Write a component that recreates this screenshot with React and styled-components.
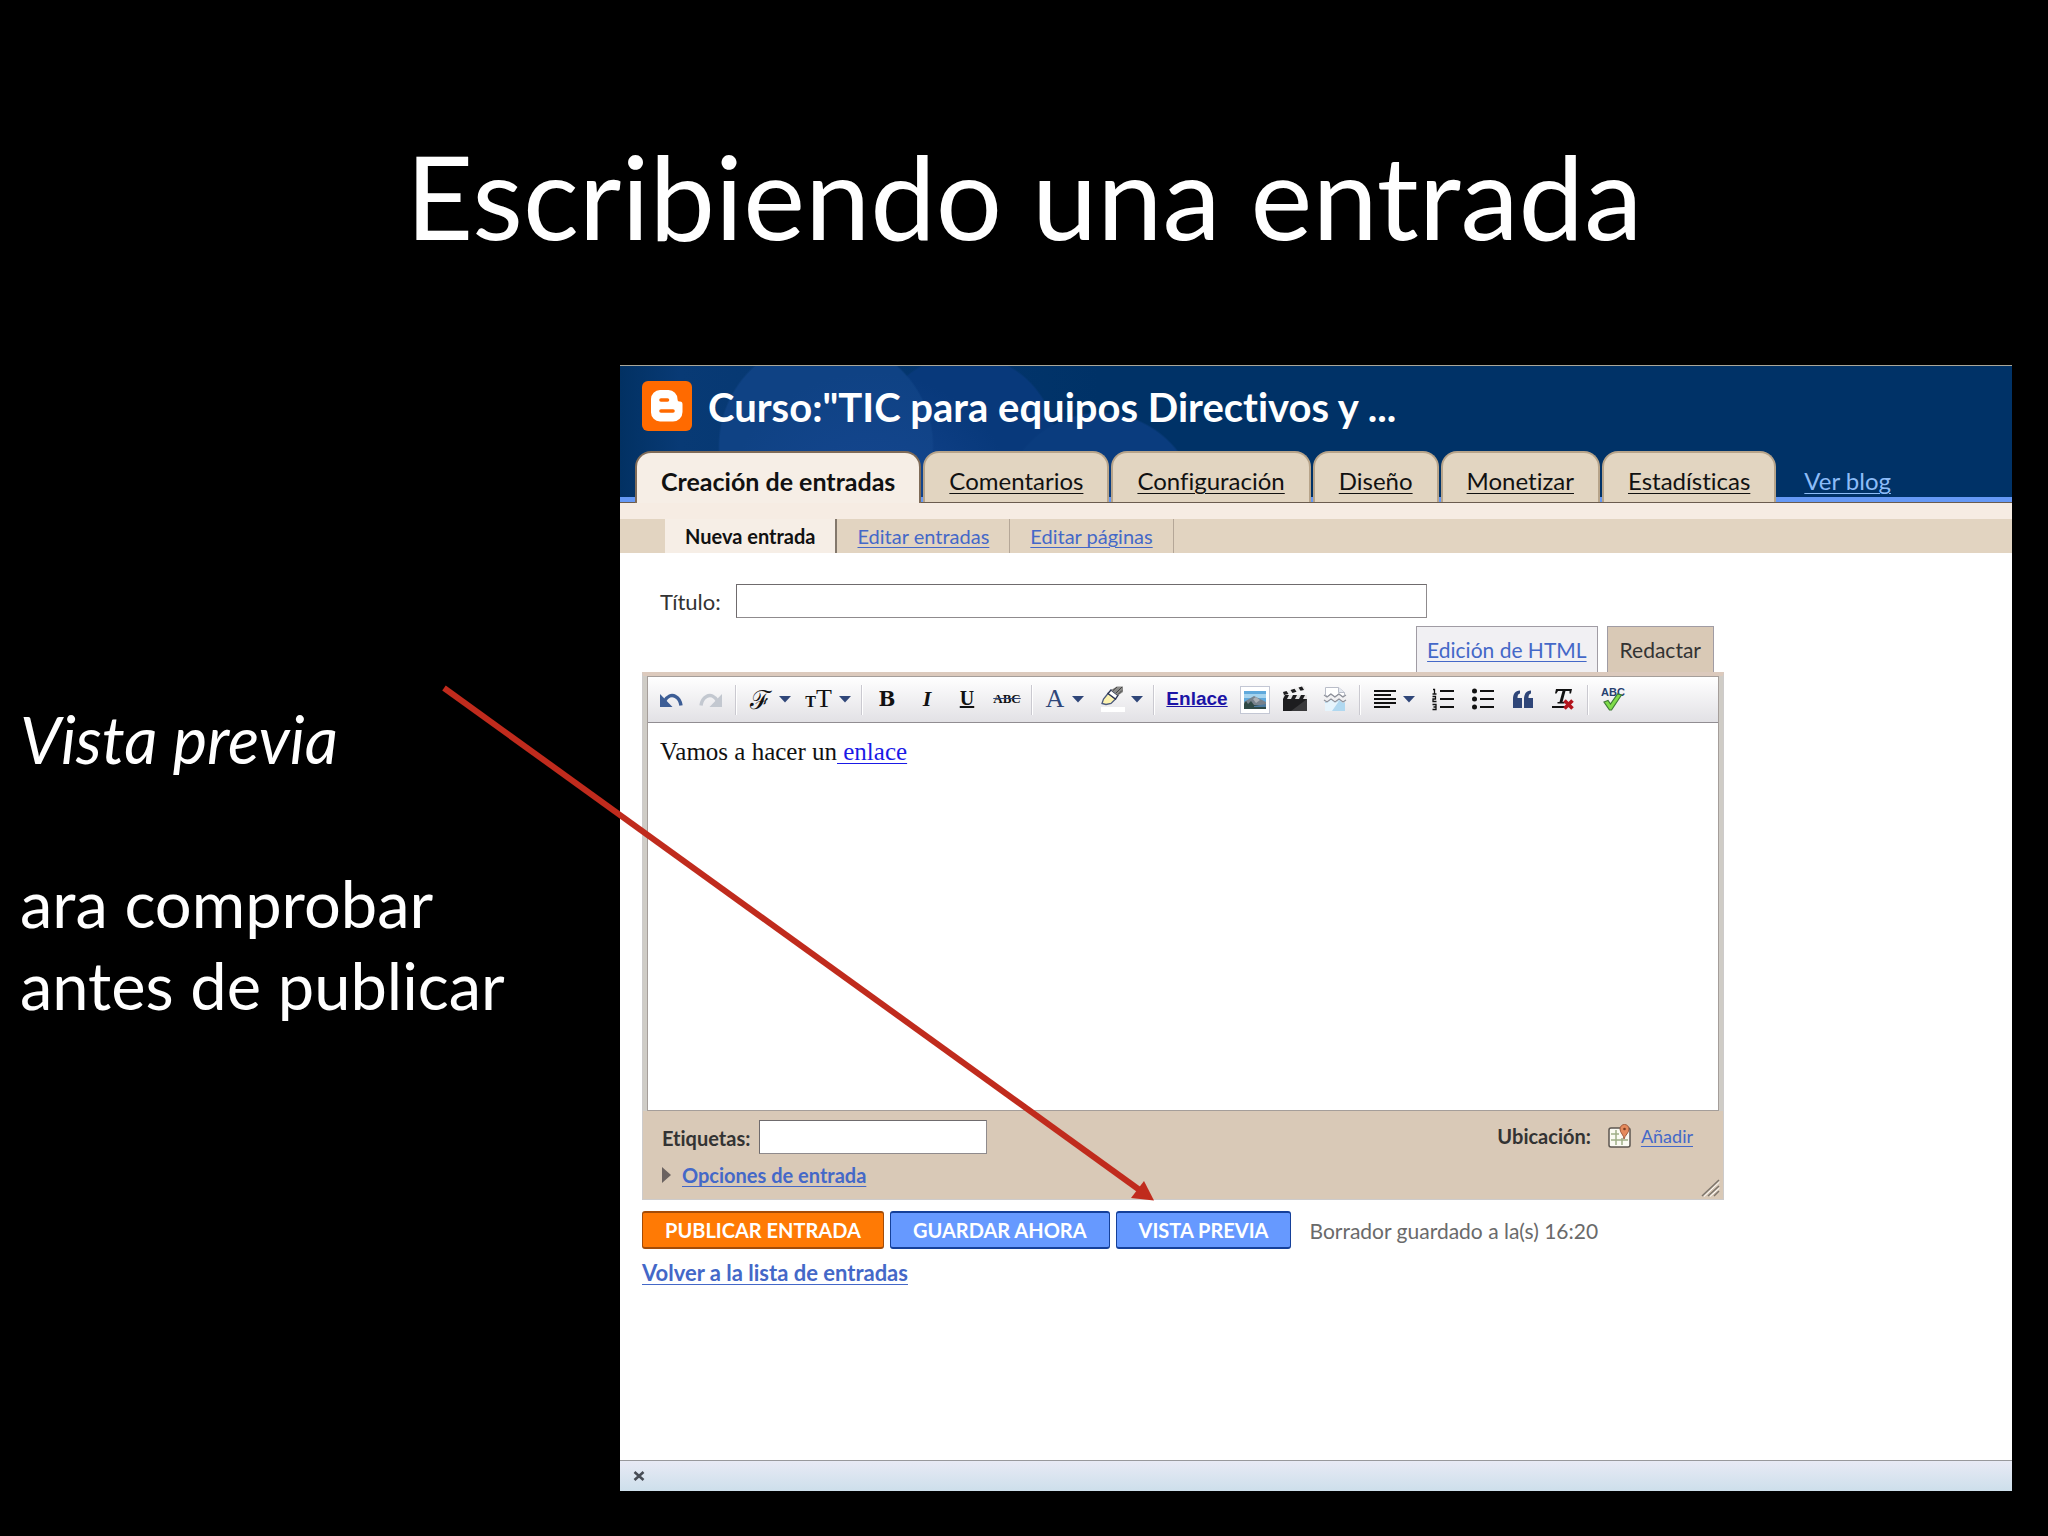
import React from "react";
import styled, { createGlobalStyle } from "styled-components";

const ui = `Lato, "Open Sans", sans-serif`;
const serif = `"Liberation Serif", "Times New Roman", serif`;
const link = "#4468c8";
const navy = "#2f4679";

const GlobalStyle = createGlobalStyle`
  *, *::before, *::after { box-sizing: border-box; }
  body { margin: 0; background: #000; font-variant-ligatures: none; }
`;

/* Slide */

const Slide = styled.main`
  min-height: 100vh;
  display: flex;
  flex-direction: column;
  padding: 125px 0 45px;
  background: #000;
  color: #fff;
  font-family: ${ui};
`;

const SlideTitle = styled.h1`
  margin: 0 0 100px;
  text-align: center;
  font-size: 117px;
  line-height: 140px;
  font-weight: 400;
`;

const SlideBody = styled.div`
  position: relative;
  flex: 1;
  display: grid;
  grid-template-columns: 620px minmax(0, 1fr);
  padding-right: 36px;
`;

const Notes = styled.div`
  padding: 333px 100px 0 20px;
  font-size: 65px;
  line-height: 82px;
  p { margin: 0 0 82px; }
`;

const Arrow = styled.svg`
  position: absolute;
  left: 430px;
  top: 310px;
  pointer-events: none;
`;

/* Browser panel */

const Panel = styled.section`
  display: flex;
  flex-direction: column;
  border-top: 1px solid #a9a79a;
  background: #fff;
  color: #333;
`;

const Header = styled.header`
  background:
    radial-gradient(circle at 250px 156px, #16479299 0 60px, transparent 150px) no-repeat,
    radial-gradient(circle at 480px 145px, #0a3c7e 0 97px, transparent 99px) no-repeat,
    radial-gradient(circle at 206px 80px, #0f4284 0 106px, transparent 108px) no-repeat,
    radial-gradient(circle at 345px 80px, #08397b 0 90px, transparent 92px) no-repeat,
    linear-gradient(90deg, #023163, #083a75 60px, #003267 480px);
  background-color: #003267;
`;

const Brand = styled.div`
  display: flex;
  align-items: center;
  gap: 16px;
  padding: 15px 22px 20px;
`;

const BlogName = styled.h2`
  margin: 0;
  padding-top: 2px;
  color: #fff;
  font-size: 40px;
  line-height: 48px;
  font-weight: 700;
`;

const Tabs = styled.nav`
  display: flex;
  gap: 2px;
  padding-left: 15px;
  border-bottom: 1px solid #6b5c4f;
  background: linear-gradient(#6699f5, #6699f5) bottom / 100% 5px no-repeat;
`;

const Tab = styled.a`
  height: ${(p) => (p.$active ? 52 : 51)}px;
  margin-bottom: ${(p) => (p.$active ? -1 : 0)}px;
  padding: 14px 24px 0;
  border: 2px solid ${(p) => (p.$active ? "#7f6b58" : "#b7a48a")};
  border-bottom: 0;
  border-radius: 16px 16px 0 0;
  background: ${(p) => (p.$active ? "#f6eee6" : "#e2d5c1")};
  color: #111;
  font-size: ${(p) => (p.$active ? 25 : 24)}px;
  line-height: 28px;
  font-weight: ${(p) => (p.$active ? 700 : 400)};
  text-decoration: ${(p) => (p.$active ? "none" : "underline")};
  text-decoration-thickness: 1px;
  text-underline-offset: 3px;
`;

const ViewBlog = styled.a`
  padding: 16px 26px 0;
  color: #8cbcf8;
  font-size: 24px;
  line-height: 28px;
  text-decoration-thickness: 1px;
  text-underline-offset: 3px;
`;

const SubTabs = styled.nav`
  display: flex;
  height: 50px;
  padding: 16px 0 0 45px;
  background: linear-gradient(#f6ece3 0 16px, #e2d4c1 16px);
`;

const SubTab = styled.a`
  padding: 5px 20px;
  border-right: ${(p) => (p.$active ? "2px solid #83786c" : "1px solid #b5a798")};
  background: ${(p) => (p.$active ? "#f6eee6" : "transparent")};
  color: ${(p) => (p.$active ? "#111" : link)};
  font-size: 20px;
  line-height: 24px;
  font-weight: ${(p) => (p.$active ? 700 : 400)};
  text-decoration: ${(p) => (p.$active ? "none" : "underline")};
  text-decoration-thickness: 1px;
  text-underline-offset: 3px;
`;

/* Post form */

const Form = styled.form`
  flex: 1;
  width: 1104px;
  max-width: 100%;
  padding: 31px 0 0 22px;
`;

const TitleRow = styled.div`
  display: flex;
  padding-left: 18px;
  font-size: 22px;
  line-height: 36px;
  label { width: 76px; height: 34px; }
`;

const TextBox = styled.input`
  width: ${(p) => p.$width}px;
  height: 34px;
  padding: 0 6px;
  border: 1px solid #8f8b8d;
  border-top-color: #6f6b6d;
  border-left-color: #6f6b6d;
  border-radius: 0;
  background: #fff;
  font: 20px ${ui};
`;

const ModeTabs = styled.div`
  display: flex;
  justify-content: flex-end;
  gap: 9px;
  padding: 8px 10px 0 0;
`;

const ModeTab = styled.a`
  height: 46px;
  padding: 11px ${(p) => (p.$active ? 12 : 10)}px 0;
  border: 1px solid #a09ca4;
  border-bottom: 0;
  background: ${(p) => (p.$active ? "#d9c9b6" : "#f1f0f3")};
  color: ${(p) => (p.$active ? "#333" : link)};
  font-size: 21px;
  line-height: 24px;
  text-decoration: ${(p) => (p.$active ? "none" : "underline")};
  text-decoration-thickness: 1px;
  text-underline-offset: 3px;
`;

const Editor = styled.div`
  position: relative;
  border: 1px solid #cdcbcb;
  border-top: 4px solid #dccabd;
  background: #d9c9b7;
`;

const EditorFrame = styled.div`
  padding: 0 4px;
  background: #cfccc6;
`;

const EditorBox = styled.div`
  border: 1px solid #a59e9a;
  background: #fff;
`;

const Toolbar = styled.div`
  display: flex;
  align-items: center;
  height: 46px;
  padding-left: 3px;
  border-bottom: 1px solid #918d92;
  background: linear-gradient(#fff, #e2e1e5);
`;

const Tool = styled.button`
  display: flex;
  align-items: center;
  justify-content: center;
  gap: ${(p) => p.$gap || 0}px;
  width: ${(p) => p.$width || 40}px;
  height: 34px;
  padding: 0 0 2px;
  border: 0;
  background: none;
  color: #111;
  font: 700 22px ${serif};
`;

const PictureTool = styled(Tool)`
  width: 30px;
  height: 28px;
  margin: 0 5px;
  padding: 0;
  border: 1px solid #c3c7d4;
  background: #fff;
`;

const Separator = styled.span`
  width: 2px;
  height: 30px;
  margin: 0 4px;
  border-left: 1px solid #cac9d0;
  border-right: 1px solid #fff;
`;

const Letter = styled.span`
  color: ${(p) => p.$color || "#111"};
  font: ${(p) => p.$font};
  text-decoration: ${(p) => p.$line || "none"};
  text-decoration-color: ${(p) => p.$lineColor || "currentColor"};
`;

const Sizes = styled.span`
  display: flex;
  align-items: baseline;
`;

const Writing = styled.div`
  height: 387px;
  padding: 15px 12px;
  color: #111;
  font: 25px/28px ${serif};
  outline: none;
  a { color: #1a1ae6; text-decoration-thickness: 1px; text-underline-offset: 3px; }
`;

const EditorFooter = styled.div`
  display: flex;
  justify-content: space-between;
  padding: 9px 30px 12px 19px;
  font-size: 20px;
  line-height: 24px;
  font-weight: 700;
`;

const LabelRow = styled.div`
  display: flex;
  line-height: 36px;
  label { width: 97px; height: 34px; }
`;

const OptionsRow = styled.div`
  display: flex;
  align-items: center;
  gap: 11px;
  margin-top: 9px;
`;

const Place = styled.div`
  display: flex;
  align-items: center;
  height: 32px;
  gap: 9px;
  span { margin-right: 8px; }
`;

const TextLink = styled.a`
  color: ${link};
  font-size: ${(p) => p.$size || 20}px;
  font-weight: ${(p) => p.$weight || 700};
  text-decoration-thickness: 1px;
  text-underline-offset: 3px;
`;

const Grip = styled.svg`
  position: absolute;
  right: 3px;
  bottom: 2px;
`;

const Actions = styled.div`
  display: flex;
  align-items: center;
  gap: 6px;
  padding: 11px 0 10px;
`;

const Action = styled.button`
  height: 38px;
  padding: 0 22px;
  border: 1px solid ${(p) => (p.$main ? "#a34c08" : "#15409a")};
  border-radius: 3px;
  border-bottom-width: 2px;
  border-top-width: 2px;
  background: ${(p) => (p.$main ? "#ff7a05" : "#6699ff")};
  color: #fff;
  font: 700 20px/24px ${ui};
`;

const Status = styled.span`
  margin-left: 12px;
  padding-top: 2px;
  color: #6a6a6a;
  font-size: 21px;
  line-height: 24px;
`;

const StatusBar = styled.footer`
  display: flex;
  align-items: center;
  height: 31px;
  padding-left: 13px;
  border-top: 1px solid #98999c;
  background: linear-gradient(#e8eaf5, #cddfeb);
`;

const Close = styled.button`
  display: flex;
  padding: 0;
  border: 0;
  background: none;
`;

/* Drawings */

const Caret = () => (
  <svg width="12" height="8" viewBox="0 0 12 8" aria-hidden="true">
    <path d="M0 1h12L6 7.500z" fill={navy} />
  </svg>
);

const Logo = () => (
  <svg width="50" height="50" viewBox="0 0 50 50" aria-label="Blogger">
    <rect width="50" height="50" rx="6" fill="#ff6a00" />
    <path d="M18 9h8.500a9 9 0 0 1 9 9c0 2 .8 2.600 2.500 2.600s2.500 1 2.500 2.800V31a9.500 9.500 0 0 1-9.500 9.500H18A9 9 0 0 1 9 31.500V18a9 9 0 0 1 9-9z" fill="#fff" />
    <path d="M19 19h6.500M19 30h12" stroke="#ff6a00" strokeWidth="3.600" strokeLinecap="round" />
  </svg>
);

const Turn = ({ color, flip }) => (
  <svg width="24" height="20" viewBox="0 0 24 20" aria-hidden="true">
    <g transform={flip ? "translate(24 0) scale(-1 1)" : undefined}>
      <path d="M1 5v13h12.500z" fill={color} />
      <path d="M5.500 12c3-5 7-7 11-4.500 3.500 2 5 5 5.500 9" fill="none" stroke={color} strokeWidth="3.400" />
    </g>
  </svg>
);

const Highlighter = () => (
  <svg width="25" height="27" viewBox="0 0 25 27" aria-hidden="true">
    <path d="M1 22h24v5H1z" fill="#fff" />
    <path d="M2 18.500 3.500 14 8 8.500l7.500 5.500-4.500 4.500-5 1z" fill="#fdf3b0" stroke="#4c5a7c" strokeWidth="1.300" />
    <path d="M8 8.500 11 5l7 5.500-2.500 3.500z" fill="#fff" stroke="#2c3552" strokeWidth="1.300" />
    <path d="M11 5l6-3.500h6V7l-5 3.500z" fill="#8a8a88" />
    <path d="M13 5.500 17 2M16 8l6-6M18 9.500l4-4" stroke="#444" strokeWidth="1" />
  </svg>
);

const Photo = () => (
  <svg width="22" height="18" viewBox="0 0 22 18" aria-hidden="true">
    <rect width="22" height="18" fill="#5fa9dc" />
    <path d="M0 3h22v4H0z" fill="#a4d3ee" />
    <path d="M0 11 5 8l5-3 4 2 4 2 4 2v7H0z" fill="#77828c" />
    <path d="M9 8l3-2 4 3-4 3z" fill="#aab0b5" />
    <path d="M0 13l2-3 2 3 3-3 3 4h12v4H0z" fill="#2f4a46" />
    <path d="M10 15l12-2v3H10z" fill="#4d7ba0" />
  </svg>
);

const Clapper = () => (
  <svg width="26" height="26" viewBox="0 0 26 26" aria-hidden="true">
    <path d="M1 13h24v12H1z" fill="#1d1d1f" />
    <path d="M25 13v12L9 25z" fill="#3a3a3c" />
    <path d="M1 9h24v4H1z" fill="#e4e4e4" />
    <path d="M3 9h4l-2 4H1zM11 9h4l-2 4H9zM19 9h4l-2 4h-4z" fill="#1d1d1f" />
    <path d="M1 6 22 0l1.500 3.500L2 9z" fill="#ededed" />
    <path d="M1 6 4.500 5 6.500 8 2 9zM8.500 4l4-1.200 2 3-4 1.200zM16.500 1.600l3.500-1L22 4l-3.500.8z" fill="#1d1d1f" />
  </svg>
);

const TornPage = () => (
  <svg width="24" height="26" viewBox="0 0 24 26" aria-hidden="true">
    <path d="M2.500 9V1.500h13l6 5V9l-2 2-4-3-4 3-4-3-3 2.500z" fill="#fff" stroke="#b9bdc8" />
    <path d="M15.500 1.500v5h6" fill="#e4e8f0" stroke="#b9bdc8" />
    <path d="M1 9l3 2 4-3 4 3 4-3 4 3 3-2M1 14l3 2 4-3 4 3 4-3 4 3 3-2" fill="none" stroke="#8f929b" strokeWidth="1.200" />
    <path d="M2 15.500 4 17l4-3 4 3 4-3 4 3 2-1v9H2z" fill="#b0d8f0" />
    <path d="M2 17v8h7l7-10-4 2-4-3-4 3z" fill="#e6f4fc" />
  </svg>
);

const Align = () => (
  <svg width="24" height="20" viewBox="0 0 24 20" aria-hidden="true">
    <path d="M1 2h22M1 6h17M1 10h22M1 14h22M1 18h16" stroke="#111" strokeWidth="2" />
  </svg>
);

const Numbered = () => (
  <svg width="24" height="24" viewBox="0 0 24 24" aria-hidden="true">
    <path d="M9 4h14M9 12h14M9 20h14" stroke="#111" strokeWidth="2" />
    <path d="M2 2.500h1.500V7M1.500 7h4M1.500 9.500h3v2.500h-2.500v2.500h3.500M1.500 17.500h3.500v5H1.500M2.500 20H5" fill="none" stroke="#111" strokeWidth="1.300" />
  </svg>
);

const Bullets = () => (
  <svg width="24" height="24" viewBox="0 0 24 24" aria-hidden="true">
    <path d="M9 4h14M9 12h14M9 20h14" stroke="#111" strokeWidth="2" />
    <circle cx="3.500" cy="4" r="2.500" fill="#111" />
    <circle cx="3.500" cy="12" r="2.500" fill="#111" />
    <circle cx="3.500" cy="20" r="2.500" fill="#111" />
  </svg>
);

const Quote = () => (
  <svg width="22" height="18" viewBox="0 0 22 18" aria-hidden="true">
    <path d="M1 18V9c0-5 2-8 7-8.500v3C6 4 5.500 5.500 5.500 8H10v10zM12 18V9c0-5 2-8 7-8.500v3c-2 .5-2.500 2-2.500 4.500H21v10z" fill={navy} />
  </svg>
);

const ClearFormat = () => (
  <svg width="24" height="24" viewBox="0 0 24 24" aria-hidden="true">
    <path d="M5 2h16l-1 4.500h-1.500L18.500 4h-4l-3 11h2v1.500H6.500V15h2l3-11H7L5.500 6.500H4z" fill="#111" />
    <path d="M1 20h13" stroke="#111" strokeWidth="2" />
    <path d="M13.500 13.500l8 8M21.500 13.500l-8 8" stroke="#b3131b" strokeWidth="3.600" />
  </svg>
);

const Check = () => (
  <svg width="22" height="18" viewBox="0 0 22 18" aria-hidden="true">
    <path d="M2 9 6 7.500l2.500 3.500L15.500 1l4 1L9.500 17H7.500z" fill="#7fdc4a" stroke="#3f7a35" strokeWidth="1.200" />
  </svg>
);

const SpellMark = styled.span`
  display: grid;
  justify-items: center;
  svg { margin-top: -4px; }
`;

const MapPin = () => (
  <svg width="24" height="24" viewBox="0 0 24 24" aria-hidden="true">
    <rect x="1" y="4" width="21" height="19" rx="2" fill="#fafaf2" stroke="#5c5650" strokeWidth="1.500" />
    <path d="M3 10h8M3 16h17M8 6v15M14 14v7" stroke="#9fae86" strokeWidth="1.500" />
    <path d="M16 15c0-4-4-6-4-10a4.500 4.500 0 0 1 9 0c0 4-4 6-5 10z" fill="#e58a5c" stroke="#a05a3c" />
    <circle cx="16.500" cy="5" r="1.300" fill="#7a3c22" />
  </svg>
);

const tabs = ["Comentarios", "Configuración", "Diseño", "Monetizar", "Estadísticas"];

const Bar = () => (
  <Toolbar role="toolbar" aria-label="Formato">
    <Tool type="button" aria-label="Deshacer"><Turn color="#3d5e96" /></Tool>
    <Tool type="button" aria-label="Rehacer"><Turn color="#c3c8d0" flip /></Tool>
    <Separator />
    <Tool type="button" aria-label="Fuente" $width={58} $gap={8}>
      <Letter $font={`400 26px "DejaVu Serif", serif`}>ℱ</Letter><Caret />
    </Tool>
    <Tool type="button" aria-label="Tamaño" $width={58} $gap={7}>
      <Sizes>
        <Letter $font={`700 16px ${serif}`}>T</Letter>
        <Letter $font={`400 26px ${serif}`}>T</Letter>
      </Sizes>
      <Caret />
    </Tool>
    <Separator />
    <Tool type="button" aria-label="Negrita"><Letter $font={`700 20px "DejaVu Serif", serif`}>B</Letter></Tool>
    <Tool type="button" aria-label="Cursiva"><Letter $font={`italic 700 22px ${serif}`}>I</Letter></Tool>
    <Tool type="button" aria-label="Subrayado"><Letter $font={`700 20px ${serif}`} $line="underline">U</Letter></Tool>
    <Tool type="button" aria-label="Tachado">
      <Letter $font={`700 13px ${serif}`} $line="line-through" $lineColor={navy}>ABC</Letter>
    </Tool>
    <Separator />
    <Tool type="button" aria-label="Color de texto" $width={56} $gap={8}>
      <Letter $font={`400 26px/28px ${serif}`} $color={navy}>A</Letter><Caret />
    </Tool>
    <Tool type="button" aria-label="Color de fondo" $width={56} $gap={6}><Highlighter /><Caret /></Tool>
    <Separator />
    <Tool type="button" $width={76}>
      <Letter $font={`700 19px "Liberation Sans", Arial, sans-serif`} $color="#1b13a6" $line="underline">Enlace</Letter>
    </Tool>
    <PictureTool type="button" aria-label="Imagen"><Photo /></PictureTool>
    <Tool type="button" aria-label="Vídeo"><Clapper /></Tool>
    <Tool type="button" aria-label="Salto de página"><TornPage /></Tool>
    <Separator />
    <Tool type="button" aria-label="Alineación" $width={58} $gap={6}><Align /><Caret /></Tool>
    <Tool type="button" aria-label="Lista numerada"><Numbered /></Tool>
    <Tool type="button" aria-label="Lista"><Bullets /></Tool>
    <Tool type="button" aria-label="Cita"><Quote /></Tool>
    <Tool type="button" aria-label="Quitar formato"><ClearFormat /></Tool>
    <Separator />
    <Tool type="button" aria-label="Ortografía">
      <SpellMark>
        <Letter $font={`700 11px/10px "Liberation Sans", Arial, sans-serif`} $color="#26406f">ABC</Letter>
        <Check />
      </SpellMark>
    </Tool>
  </Toolbar>
);

export default function App() {
  return (
    <>
      <GlobalStyle />
      <Slide>
        <SlideTitle>Escribiendo una entrada</SlideTitle>
        <SlideBody>
          <Notes>
            <p><em>Vista previa</em></p>
            <p>ara comprobar antes de publicar</p>
          </Notes>
          <Panel>
            <Header>
              <Brand>
                <Logo />
                <BlogName>Curso:"TIC para equipos Directivos y ...</BlogName>
              </Brand>
              <Tabs>
                <Tab href="#entradas" $active>Creación de entradas</Tab>
                {tabs.map((name) => <Tab key={name} href="#seccion">{name}</Tab>)}
                <ViewBlog href="#blog">Ver blog</ViewBlog>
              </Tabs>
            </Header>
            <SubTabs>
              <SubTab href="#nueva" $active>Nueva entrada</SubTab>
              <SubTab href="#editar">Editar entradas</SubTab>
              <SubTab href="#paginas">Editar páginas</SubTab>
            </SubTabs>
            <Form onSubmit={(e) => e.preventDefault()}>
              <TitleRow>
                <label htmlFor="titulo">Título:</label>
                <TextBox id="titulo" type="text" $width={691} />
              </TitleRow>
              <ModeTabs>
                <ModeTab href="#html">Edición de HTML</ModeTab>
                <ModeTab href="#redactar" $active>Redactar</ModeTab>
              </ModeTabs>
              <Editor>
                <EditorFrame>
                  <EditorBox>
                    <Bar />
                    <Writing contentEditable suppressContentEditableWarning role="textbox" aria-label="Entrada" spellCheck={false}>
                      Vamos a hacer un<a href="#enlace"> enlace</a>
                    </Writing>
                  </EditorBox>
                </EditorFrame>
                <EditorFooter>
                  <div>
                    <LabelRow>
                      <label htmlFor="etiquetas">Etiquetas:</label>
                      <TextBox id="etiquetas" type="text" $width={228} />
                    </LabelRow>
                    <OptionsRow>
                      <svg width="9" height="16" viewBox="0 0 9 16" aria-hidden="true">
                        <path d="M0 0l9 8-9 8z" fill="#6b6260" />
                      </svg>
                      <TextLink href="#opciones">Opciones de entrada</TextLink>
                    </OptionsRow>
                  </div>
                  <Place>
                    <span>Ubicación:</span>
                    <MapPin />
                    <TextLink href="#lugar" $size={18} $weight={400}>Añadir</TextLink>
                  </Place>
                </EditorFooter>
                <Grip width="19" height="18" viewBox="0 0 19 18" aria-hidden="true">
                  <path d="M1 17 18 1M7 17 18 7M13 17l5-5" stroke="#7d756c" strokeWidth="1.500" />
                  <path d="M3 17.500 18.500 3M9 17.500 18.500 9" stroke="#fff" strokeWidth="1" />
                </Grip>
              </Editor>
              <Actions>
                <Action type="submit" $main>PUBLICAR ENTRADA</Action>
                <Action type="button">GUARDAR AHORA</Action>
                <Action type="button">VISTA PREVIA</Action>
                <Status>Borrador guardado a la(s) 16:20</Status>
              </Actions>
              <TextLink href="#lista" $size={22}>Volver a la lista de entradas</TextLink>
            </Form>
            <StatusBar>
              <Close type="button" aria-label="Cerrar">
                <svg width="12" height="10" viewBox="0 0 12 10" aria-hidden="true">
                  <path d="M1.500 1l9 8M10.500 1l-9 8" stroke="#474c55" strokeWidth="2.600" />
                </svg>
              </Close>
            </StatusBar>
          </Panel>
          <Arrow width="740" height="540" viewBox="0 0 740 540" aria-hidden="true">
            <path d="M14 13 711 516" stroke="#c02b1d" strokeWidth="6" />
            <path d="M724 525.500 714 506 701 523z" fill="#c02b1d" />
          </Arrow>
        </SlideBody>
      </Slide>
    </>
  );
}
